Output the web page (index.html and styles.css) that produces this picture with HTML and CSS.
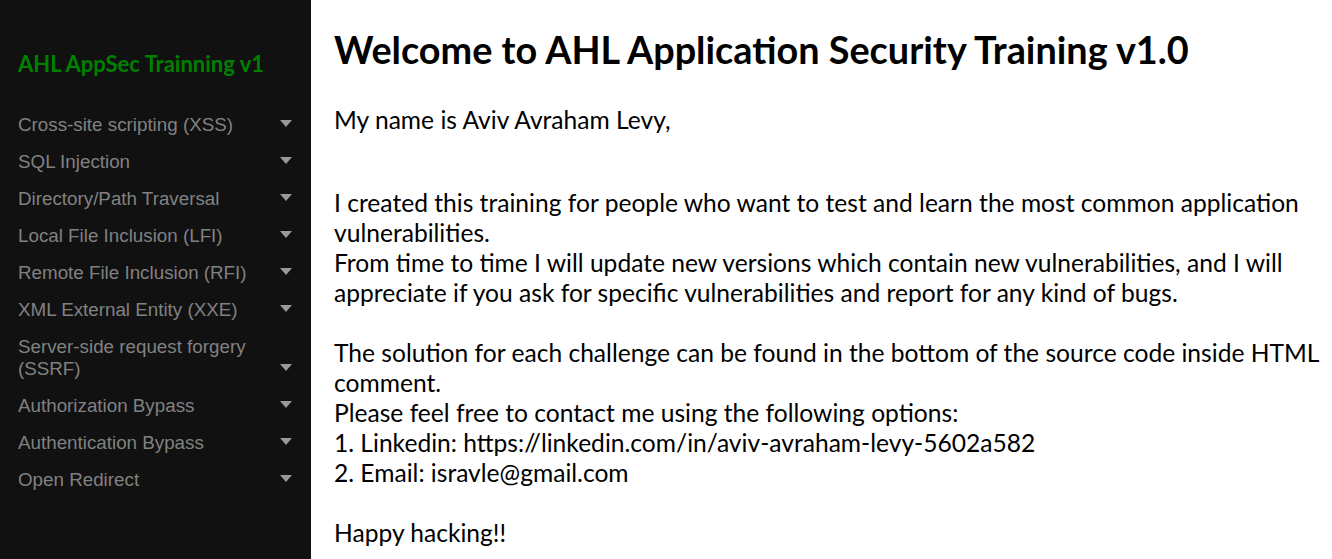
FILE: index.html
```html
<!DOCTYPE html>
<html>
<head>
<meta charset="utf-8">
<link rel="stylesheet" href="styles.css">
</head>
<body>
<div class="layout">
  <nav class="sidenav">
    <div class="brand">AHL AppSec Trainning v1</div>
    <div class="menu">
      <button class="dropdown-btn"><span>Cross-site scripting (XSS)</span><i class="caret"></i></button>
      <button class="dropdown-btn"><span>SQL Injection</span><i class="caret"></i></button>
      <button class="dropdown-btn"><span>Directory/Path Traversal</span><i class="caret"></i></button>
      <button class="dropdown-btn"><span>Local File Inclusion (LFI)</span><i class="caret"></i></button>
      <button class="dropdown-btn"><span>Remote File Inclusion (RFI)</span><i class="caret"></i></button>
      <button class="dropdown-btn"><span>XML External Entity (XXE)</span><i class="caret"></i></button>
      <button class="dropdown-btn"><span>Server-side request forgery (SSRF)</span><i class="caret"></i></button>
      <button class="dropdown-btn"><span>Authorization Bypass</span><i class="caret"></i></button>
      <button class="dropdown-btn"><span>Authentication Bypass</span><i class="caret"></i></button>
      <button class="dropdown-btn"><span>Open Redirect</span><i class="caret"></i></button>
    </div>
  </nav>
  <main class="main">
    <h1 class="title">Welcome to AHL Application Security Training v1.0</h1>
    <p class="intro">My name is Aviv Avraham Levy,</p>
    <p class="body-text">I created this training for people who want to test and learn the most common application vulnerabilities.<br>From time to time I will update new versions which contain new vulnerabilities, and I will appreciate if you ask for specific vulnerabilities and report for any kind of bugs.<br><br>The solution for each challenge can be found in the bottom of the source code inside HTML comment.<br>Please feel free to contact me using the following options:<br>1. Linkedin: https://linkedin.com/in/aviv-avraham-levy-5602a582<br>2. Email: isravle@gmail.com<br><br>Happy hacking!!</p>
  </main>
</div>
</body>
</html>
```
FILE: styles.css
```css
html, body {
  margin: 0;
  padding: 0;
  height: 100%;
  overflow: hidden;
}
body {
  background: #fff;
  font-family: "Lato", "Liberation Sans", sans-serif;
}
.layout {
  display: flex;
  height: 100%;
}
.sidenav {
  width: 311px;
  flex: 0 0 311px;
  background: #111;
  padding-top: 50px;
  box-sizing: border-box;
}
.brand {
  font-family: "Lato", sans-serif;
  font-weight: bold;
  font-size: 22px;
  color: #008000;
  padding-left: 18px;
  line-height: 28px;
  margin-bottom: 29px;
}
.menu {
  display: flex;
  flex-direction: column;
}
.dropdown-btn {
  display: flex;
  align-items: flex-end;
  justify-content: space-between;
  gap: 10px;
  width: 100%;
  border: none;
  background: none;
  text-align: left;
  font-family: "Liberation Sans", Arial, sans-serif;
  font-size: 18.8px;
  line-height: 22px;
  color: #818181;
  padding: 7px 19px 8px 18px;
  cursor: pointer;
}
.caret {
  flex: 0 0 auto;
  width: 0;
  height: 0;
  border-left: 6px solid transparent;
  border-right: 6px solid transparent;
  border-top: 7px solid #999;
  margin-bottom: 9px;
}
.main {
  flex: 1;
  padding: 0 12px 0 23px;
  color: #000;
}
.title {
  font-family: "Lato", sans-serif;
  font-weight: bold;
  font-size: 37.8px;
  line-height: 44px;
  margin: 28px 0 0;
}
.intro, .body-text {
  font-size: 24.6px;
  line-height: 30px;
  margin: 0;
}
.intro {
  margin-top: 33px;
}
.body-text {
  margin-top: 53px;
}
```
